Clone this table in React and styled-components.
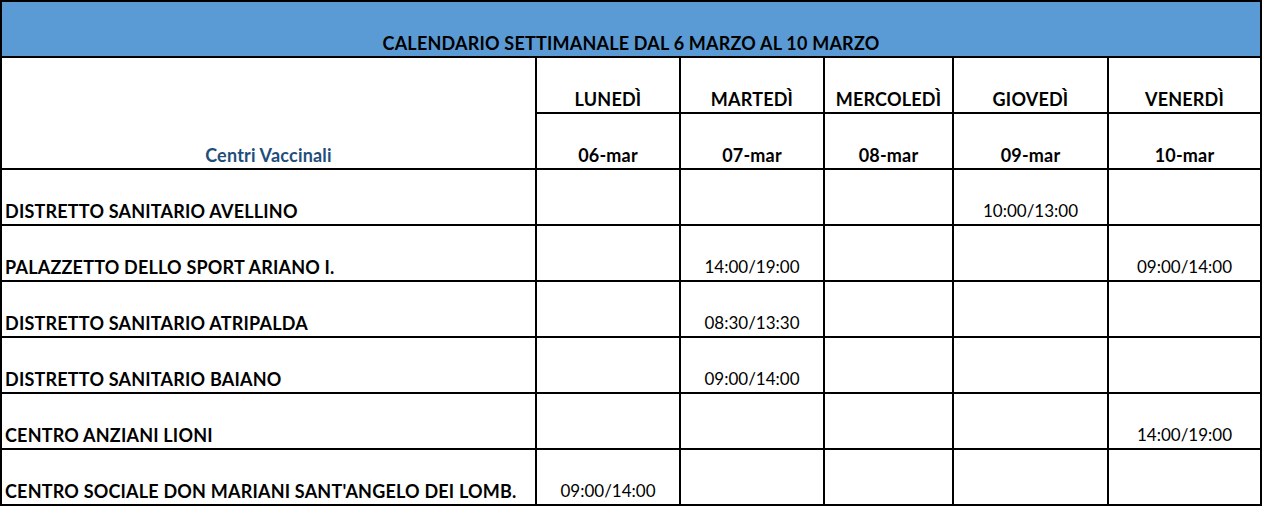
import React from 'react';
import styled, { createGlobalStyle } from 'styled-components';

const GlobalStyle = createGlobalStyle`
	html, body {
		margin: 0;
		padding: 0;
		background: #ffffff;
	}
	body {
		font-family: Lato, "Open Sans", sans-serif;
		color: #000000;
	}
`;

const Sheet = styled.div`
	display: grid;
	grid-template-columns: 533px 142px 142px 127px 153px 151px;
	grid-template-rows: repeat(9, 54px);
	gap: 2px;
	padding: 2px;
	width: 1262px;
	height: 506px;
	box-sizing: border-box;
	background: #000000;
`;

const Cell = styled.div`
	background: #ffffff;
	display: flex;
	align-items: flex-end;
	justify-content: ${(p) => (p.$left ? 'flex-start' : 'center')};
	padding: 0 0 3px ${(p) => (p.$left ? '3px' : '0')};
	box-sizing: border-box;
	font-size: ${(p) => (p.$bold ? '18px' : '17px')};
	letter-spacing: ${(p) => (p.$bold ? '0.2px' : '0')};
	line-height: 20px;
	font-weight: ${(p) => (p.$bold ? 700 : 400)};
	white-space: nowrap;
`;

const Title = styled(Cell)`
	grid-column: 1 / -1;
	background: #5b9bd5;
`;

const CentersHead = styled(Cell)`
	grid-row: span 2;
	color: #1f4e79;
`;

const days = [
	{ name: 'LUNEDÌ', date: '06-mar' },
	{ name: 'MARTEDÌ', date: '07-mar' },
	{ name: 'MERCOLEDÌ', date: '08-mar' },
	{ name: 'GIOVEDÌ', date: '09-mar' },
	{ name: 'VENERDÌ', date: '10-mar' },
];

const centers = [
	{ name: 'DISTRETTO SANITARIO AVELLINO', slots: ['', '', '', '10:00/13:00', ''] },
	{ name: 'PALAZZETTO DELLO SPORT ARIANO I.', slots: ['', '14:00/19:00', '', '', '09:00/14:00'] },
	{ name: 'DISTRETTO SANITARIO ATRIPALDA', slots: ['', '08:30/13:30', '', '', ''] },
	{ name: 'DISTRETTO SANITARIO BAIANO', slots: ['', '09:00/14:00', '', '', ''] },
	{ name: 'CENTRO ANZIANI LIONI', slots: ['', '', '', '', '14:00/19:00'] },
	{ name: "CENTRO SOCIALE DON MARIANI SANT'ANGELO DEI LOMB.", slots: ['09:00/14:00', '', '', '', ''] },
];

const App = () => {
	return (
		<>
			<GlobalStyle />
			<Sheet>
				<Title $bold>CALENDARIO SETTIMANALE DAL 6 MARZO AL 10 MARZO</Title>
				<CentersHead $bold>Centri Vaccinali</CentersHead>
				{days.map((d) => (
					<Cell key={d.name} $bold>{d.name}</Cell>
				))}
				{days.map((d) => (
					<Cell key={d.date} $bold>{d.date}</Cell>
				))}
				{centers.map((c) => (
					<React.Fragment key={c.name}>
						<Cell $left $bold>{c.name}</Cell>
						{c.slots.map((s, i) => (
							<Cell key={i}>{s}</Cell>
						))}
					</React.Fragment>
				))}
			</Sheet>
		</>
	);
};

export default App;
